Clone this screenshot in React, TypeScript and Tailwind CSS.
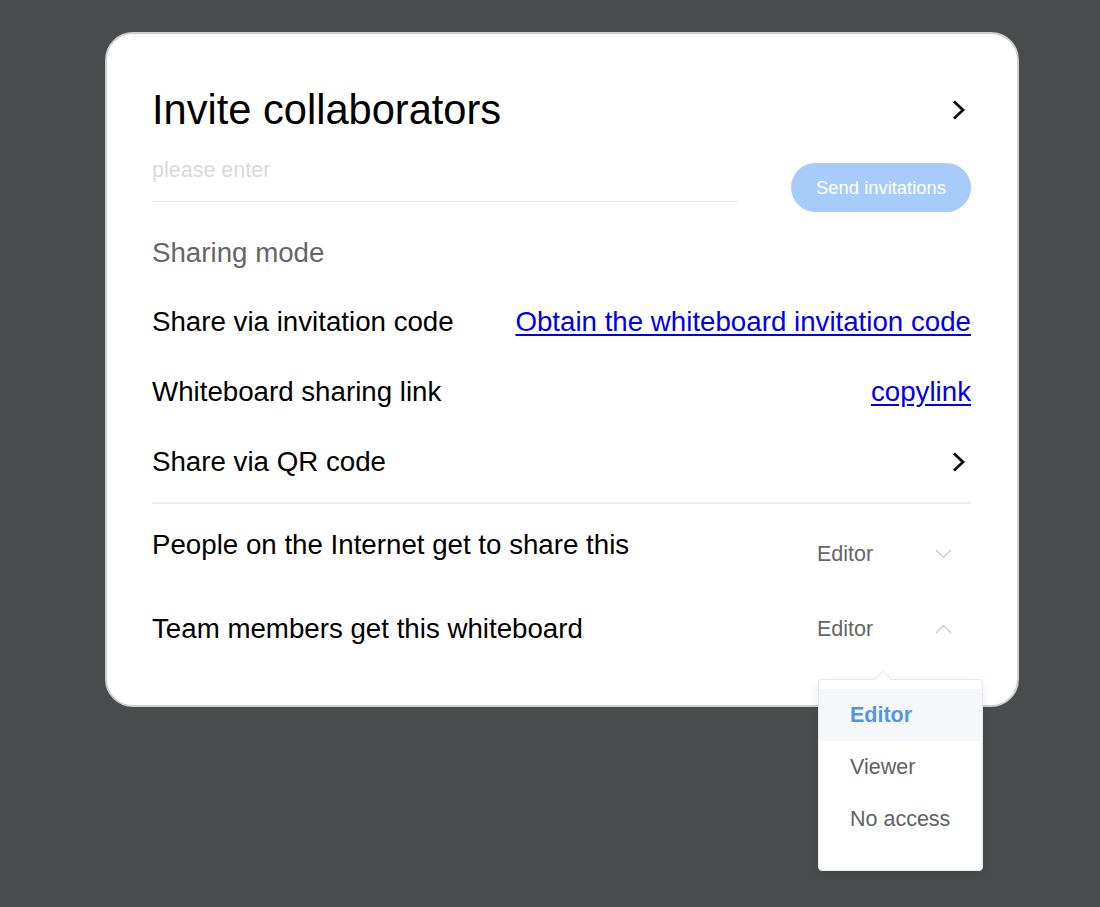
import React from "react";

const font = { fontFamily: '"Liberation Sans", Arial, sans-serif' };

function ChevronRight({ className = "" }: { className?: string }) {
  return (
    <svg className={className} width="14" height="20" viewBox="0 0 14 20" fill="none">
      <path d="M3 2.5 L11 10 L3 17.5" stroke="#111" strokeWidth="2.8" strokeLinecap="square" strokeLinejoin="miter" />
    </svg>
  );
}

function Caret({ up }: { up?: boolean }) {
  return (
    <svg width="17" height="10" viewBox="0 0 17 10" fill="none">
      {up ? (
        <path d="M1 9 L8.5 1.5 L16 9" stroke="#c4c6cc" strokeWidth="1.2" />
      ) : (
        <path d="M1 1 L8.5 8.5 L16 1" stroke="#c4c6cc" strokeWidth="1.2" />
      )}
    </svg>
  );
}

function Select({ up, children }: { up?: boolean; children?: React.ReactNode }) {
  return (
    <div className="relative flex h-[40px] w-[154px] items-center justify-between pr-[19px]">
      <span className="text-[21.5px] text-[#666666]">Editor</span>
      <Caret up={up} />
      {children}
    </div>
  );
}

export default function App() {
  return (
    <div className="min-h-[907px] w-full bg-[#4a4b4d] pl-[105px] pt-[32px]" style={font}>
      <div className="h-[675px] w-[914px] rounded-[28px] border-2 border-[#cfcfcf] bg-white pl-[45px] pr-[46px] pt-[52px] text-black">
        <div className="flex h-[48px] items-center justify-between">
          <h1 className="text-[41.6px] leading-[48px]">Invite collaborators</h1>
          <ChevronRight className="mr-[5px]" />
        </div>

        <div className="mt-[18px] flex items-start justify-between">
          <div className="h-[50px] w-[586px] border-b border-[#e6e6e6]">
            <input
              className="h-[36px] w-full bg-transparent text-[21.5px] leading-[36px] text-[#333] outline-none placeholder:text-[#d9d9d9]"
              placeholder="please enter"
              style={font}
            />
          </div>
          <button className="mt-[11px] flex h-[49px] w-[180px] items-center justify-center rounded-full bg-[#a8ccf9] text-[18.4px] text-white" style={font}>
            Send invitations
          </button>
        </div>

        <div className="mt-[21px] text-[27.7px] leading-[40px] text-[#666666]">Sharing mode</div>

        <div className="mt-[14px]">
          <div className="flex h-[70px] items-center justify-between text-[27.7px]">
            <span>Share via invitation code</span>
            <a href="#" className="text-[#0000ee] underline underline-offset-[3px]">
              Obtain the whiteboard invitation code
            </a>
          </div>
          <div className="flex h-[70px] items-center justify-between text-[27.7px]">
            <span>Whiteboard sharing link</span>
            <a href="#" className="text-[#0000ee] underline underline-offset-[3px]">
              copylink
            </a>
          </div>
          <div className="flex h-[70px] items-center justify-between text-[27.7px]">
            <span>Share via QR code</span>
            <ChevronRight className="mr-[5px]" />
          </div>
        </div>

        <div className="mt-[5px] h-[2px] bg-[#ececec]" />

        <div className="mt-[21px] flex items-start justify-between">
          <span className="text-[27.7px] leading-[40px]">People on the Internet get to share this</span>
          <div className="mt-[9px]">
            <Select />
          </div>
        </div>

        <div className="mt-[35px] flex items-start justify-between">
          <span className="text-[27.7px] leading-[40px]">Team members get this whiteboard</span>
          <Select up>
            <div className="absolute left-[1px] top-[70px] z-10 w-[165px] rounded-[4px] border border-[#e4e7ed] bg-white pb-[25px] pt-[9px] shadow-[0_2px_12px_rgba(0,0,0,0.08)]">
              <div className="absolute left-[58px] top-[-7px] h-[12px] w-[12px] rotate-45 border-l border-t border-[#e4e7ed] bg-white" />
              <div className="relative flex h-[52px] items-center bg-[#f5f7fa] pl-[31px] text-[21.5px] font-bold text-[#4f96e8]">Editor</div>
              <div className="flex h-[52px] items-center pl-[31px] text-[21.5px] text-[#606266]">Viewer</div>
              <div className="flex h-[52px] items-center pl-[31px] text-[21.5px] text-[#606266]">No access</div>
            </div>
          </Select>
        </div>
      </div>
    </div>
  );
}
